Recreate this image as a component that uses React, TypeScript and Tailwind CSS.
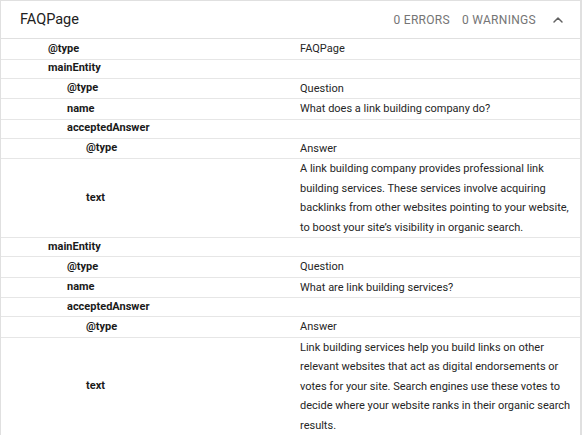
import { ChevronUp } from 'lucide-react';

interface Row {
  label: string;
  depth: number;
  value?: string;
}

const rows: Row[] = [
  { label: '@type', depth: 0, value: 'FAQPage' },
  { label: 'mainEntity', depth: 0 },
  { label: '@type', depth: 1, value: 'Question' },
  { label: 'name', depth: 1, value: 'What does a link building company do?' },
  { label: 'acceptedAnswer', depth: 1 },
  { label: '@type', depth: 2, value: 'Answer' },
  {
    label: 'text',
    depth: 2,
    value:
      'A link building company provides professional link building services. These services involve acquiring backlinks from other websites pointing to your website, to boost your site\u2019s visibility in organic search.',
  },
  { label: 'mainEntity', depth: 0 },
  { label: '@type', depth: 1, value: 'Question' },
  { label: 'name', depth: 1, value: 'What are link building services?' },
  { label: 'acceptedAnswer', depth: 1 },
  { label: '@type', depth: 2, value: 'Answer' },
  {
    label: 'text',
    depth: 2,
    value:
      'Link building services help you build links on other relevant websites that act as digital endorsements or votes for your site. Search engines use these votes to decide where your website ranks in their organic search results.',
  },
];

const indent = ['pl-[47px]', 'pl-[66px]', 'pl-[85px]'];

export default function App() {
  return (
    <div className="w-[582px] h-[435px] bg-white overflow-hidden" style={{ fontFamily: 'Roboto, "Liberation Sans", sans-serif' }}>
      <div className="border border-[#e0e0e0] border-r-2">
        {/* header */}
        <div className="h-[38px] flex items-center pl-[19px] pr-[14px] border-b border-[#e0e0e0]">
          <div className="text-[14.5px] text-[#212121] flex-1">FAQPage</div>
          <div className="text-[12px] tracking-[0.3px] text-[#757575] flex gap-[12px]">
            <span>0 ERRORS</span>
            <span>0 WARNINGS</span>
          </div>
          <ChevronUp className="w-[16px] h-[16px] ml-[14px] text-[#616161]" strokeWidth={2.2} />
        </div>

        {rows.map((r, i) => (
          <div key={i} className="flex items-center min-h-[19px] border-b border-[#e6e6e6] last:border-b-0 text-[11px]">
            <div className={`w-[299px] shrink-0 font-bold text-[#1a1a1a] ${indent[r.depth]}`}>{r.label}</div>
            <div className="w-[272px] text-[#262626] leading-[19.5px]">{r.value}</div>
          </div>
        ))}
      </div>
    </div>
  );
}
